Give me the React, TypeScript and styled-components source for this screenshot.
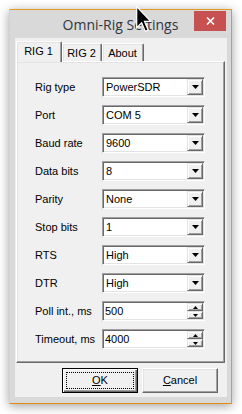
import React from 'react';
import styled, { createGlobalStyle } from 'styled-components';

const GlobalStyle = createGlobalStyle`
  html, body { margin: 0; padding: 0; background: #ffffff; }
  body { font-family: "Liberation Sans", Arial, sans-serif; font-size: 11px; color: #000; }
  *, *::before, *::after { box-sizing: border-box; }
`;

const Page = styled.div`
  position: relative;
  width: 242px;
  height: 414px;
  padding: 9px 0 0 9px;
  overflow: hidden;
  background: #ffffff;
`;

const Window = styled.div`
  width: 223px;
  height: 395px;
  display: flex;
  flex-direction: column;
  background: #d9d9d9;
  border: 1px solid #e39b1f;
  border-left-color: #d2d2d2;
  border-bottom-color: #e58a0e;
  box-shadow: 0 2px 10px rgba(0, 0, 0, 0.38);
`;

const TitleBar = styled.div`
  height: 28px;
  flex: none;
  display: grid;
  grid-template-columns: 1fr auto 1fr;
  align-items: start;
`;

const Title = styled.div`
  grid-column: 2;
  font-family: "Open Sans", "Noto Sans", sans-serif;
  font-size: 14px;
  line-height: 28px;
  padding-top: 1px;
  color: #2f3640;
  white-space: nowrap;
`;

const CloseButton = styled.div`
  grid-column: 3;
  justify-self: end;
  width: 32px;
  height: 20px;
  margin-top: 1px;
  margin-right: 5px;
  background: #c75050;
  display: flex;
  align-items: center;
  justify-content: center;
`;

const Frame = styled.div`
  flex: 1;
  display: flex;
  padding: 0 4px 6px 5px;
`;

const Client = styled.div`
  flex: 1;
  background: #f0f0f0;
  display: flex;
  flex-direction: column;
  padding: 3px 2px 0 1px;
`;

const TabStrip = styled.div`
  height: 20px;
  flex: none;
  display: flex;
  align-items: flex-end;
  position: relative;
  z-index: 2;
`;

const Tab = styled.div<{ $active?: boolean; $w: number }>`
  width: ${(p) => p.$w}px;
  height: ${(p) => (p.$active ? 21 : 18)}px;
  margin-bottom: ${(p) => (p.$active ? -1 : 0)}px;
  background: #f0f0f0;
  border-top: 1px solid #ffffff;
  border-left: 1px solid #ffffff;
  border-right: 1px solid #696969;
  box-shadow: inset -1px 0 0 #a0a0a0, inset 1px 1px 0 #e3e3e3;
  border-radius: 2px 2px 0 0;
  text-align: center;
  line-height: 13px;
  padding-top: 3px;
  padding-right: 1px;
`;

const Panel = styled.div`
  flex: none;
  height: 302px;
  position: relative;
  z-index: 1;
  background: #f0f0f0;
  border: 1px solid #ffffff;
  border-right-color: #696969;
  border-bottom-color: #696969;
  box-shadow: inset -1px -1px 0 #a0a0a0, inset 1px 1px 0 #e3e3e3;
  padding: 15px 0 0 18px;
`;

const Form = styled.div`
  display: grid;
  grid-template-columns: 67px 103px;
  grid-auto-rows: 20px;
  row-gap: 8px;
`;

const Label = styled.div`
  line-height: 20px;
  white-space: nowrap;
`;

const Field = styled.div`
  display: flex;
  align-items: stretch;
  background: #ffffff;
  border: 1px solid #a0a0a0;
  border-right-color: #ffffff;
  border-bottom-color: #ffffff;
  box-shadow: inset 1px 1px 0 #696969, inset -1px -1px 0 #e3e3e3;
  padding: 1px;
`;

const Value = styled.div<{ $pad: number }>`
  flex: 1;
  line-height: 16px;
  padding-left: ${(p) => p.$pad}px;
  white-space: nowrap;
  overflow: hidden;
`;

const DropButton = styled.div`
  width: 16px;
  flex: none;
  background: #f0f0f0;
  border: 1px solid #e3e3e3;
  border-right-color: #696969;
  border-bottom-color: #696969;
  box-shadow: inset 1px 1px 0 #ffffff, inset -1px -1px 0 #a0a0a0;
  display: flex;
  align-items: center;
  justify-content: center;
`;

const SpinColumn = styled.div`
  width: 16px;
  flex: none;
  display: flex;
  flex-direction: column;
`;

const SpinHalf = styled.div`
  flex: 1;
  background: #f0f0f0;
  border: 1px solid #e3e3e3;
  border-right-color: #696969;
  border-bottom-color: #696969;
  box-shadow: inset 1px 1px 0 #ffffff, inset -1px -1px 0 #a0a0a0;
  display: flex;
  align-items: center;
  justify-content: center;
`;

const ButtonRow = styled.div`
  flex: none;
  display: flex;
  justify-content: flex-end;
  gap: 4px;
  padding-right: 7px;
  margin-top: 5px;
`;

const PushButton = styled.div<{ $default?: boolean }>`
  width: 76px;
  height: 25px;
  position: relative;
  background: #f0f0f0;
  display: flex;
  align-items: center;
  justify-content: center;
  border: 1px solid ${(p) => (p.$default ? '#000000' : '#ffffff')};
  ${(p) =>
    p.$default
      ? `box-shadow: inset 1px 1px 0 #ffffff, inset -1px -1px 0 #696969, inset -2px -2px 0 #a0a0a0;`
      : `border-right-color: #696969; border-bottom-color: #696969;
         box-shadow: inset -1px -1px 0 #a0a0a0, inset 1px 1px 0 #e3e3e3;`}
  padding-bottom: 1px;
`;

const FocusRing = styled.div`
  position: absolute;
  inset: 3px;
  border: 1px dotted #000000;
  pointer-events: none;
`;

const Cursor = styled.svg`
  position: absolute;
  left: 136px;
  top: 6px;
  z-index: 10;
`;

const Arrow = () => (
  <svg width="7" height="4" viewBox="0 0 7 4">
    <path d="M0 0h7L3.5 4z" fill="#000" />
  </svg>
);

const SpinArrow = ({ up }: { up?: boolean }) => (
  <svg width="5" height="3" viewBox="0 0 5 3">
    <path d={up ? 'M2.5 0L5 3H0z' : 'M0 0h5L2.5 3z'} fill="#000" />
  </svg>
);

type Row = { label: string; value: string; spin?: boolean };

const rows: Row[] = [
  { label: 'Rig type', value: 'PowerSDR' },
  { label: 'Port', value: 'COM 5' },
  { label: 'Baud rate', value: '9600' },
  { label: 'Data bits', value: '8' },
  { label: 'Parity', value: 'None' },
  { label: 'Stop bits', value: '1' },
  { label: 'RTS', value: 'High' },
  { label: 'DTR', value: 'High' },
  { label: 'Poll int., ms', value: '500', spin: true },
  { label: 'Timeout, ms', value: '4000', spin: true },
];

export default function App() {
  return (
    <Page>
      <GlobalStyle />
      <Window>
        <TitleBar>
          <Title>Omni-Rig Settings</Title>
          <CloseButton>
            <svg width="9" height="8" viewBox="0 0 9 8">
              <path d="M1 0.5L8 7.5M8 0.5L1 7.5" stroke="#fff" strokeWidth="1.6" />
            </svg>
          </CloseButton>
        </TitleBar>
        <Frame>
          <Client>
            <TabStrip>
              <Tab $active $w={46}>RIG 1</Tab>
              <Tab $w={40}>RIG 2</Tab>
              <Tab $w={42}>About</Tab>
            </TabStrip>
            <Panel>
              <Form>
                {rows.map((r) => (
                  <React.Fragment key={r.label}>
                    <Label>{r.label}</Label>
                    <Field>
                      <Value $pad={r.spin ? 1 : 2}>{r.value}</Value>
                      {r.spin ? (
                        <SpinColumn>
                          <SpinHalf>
                            <SpinArrow up />
                          </SpinHalf>
                          <SpinHalf>
                            <SpinArrow />
                          </SpinHalf>
                        </SpinColumn>
                      ) : (
                        <DropButton>
                          <Arrow />
                        </DropButton>
                      )}
                    </Field>
                  </React.Fragment>
                ))}
              </Form>
            </Panel>
            <ButtonRow>
              <PushButton $default>
                <FocusRing />
                <span>
                  <u>O</u>K
                </span>
              </PushButton>
              <PushButton>
                <span>
                  <u>C</u>ancel
                </span>
              </PushButton>
            </ButtonRow>
          </Client>
        </Frame>
      </Window>
      <Cursor width="15" height="26" viewBox="0 0 12 21">
        <path
          d="M0.5 0.5V17.5L4.5 13.5L7.5 20.5L9.8 19.5L6.8 12.5H12L0.5 0.5Z"
          fill="#000"
          stroke="#fff"
          strokeWidth="1"
          strokeLinejoin="miter"
        />
      </Cursor>
    </Page>
  );
}
